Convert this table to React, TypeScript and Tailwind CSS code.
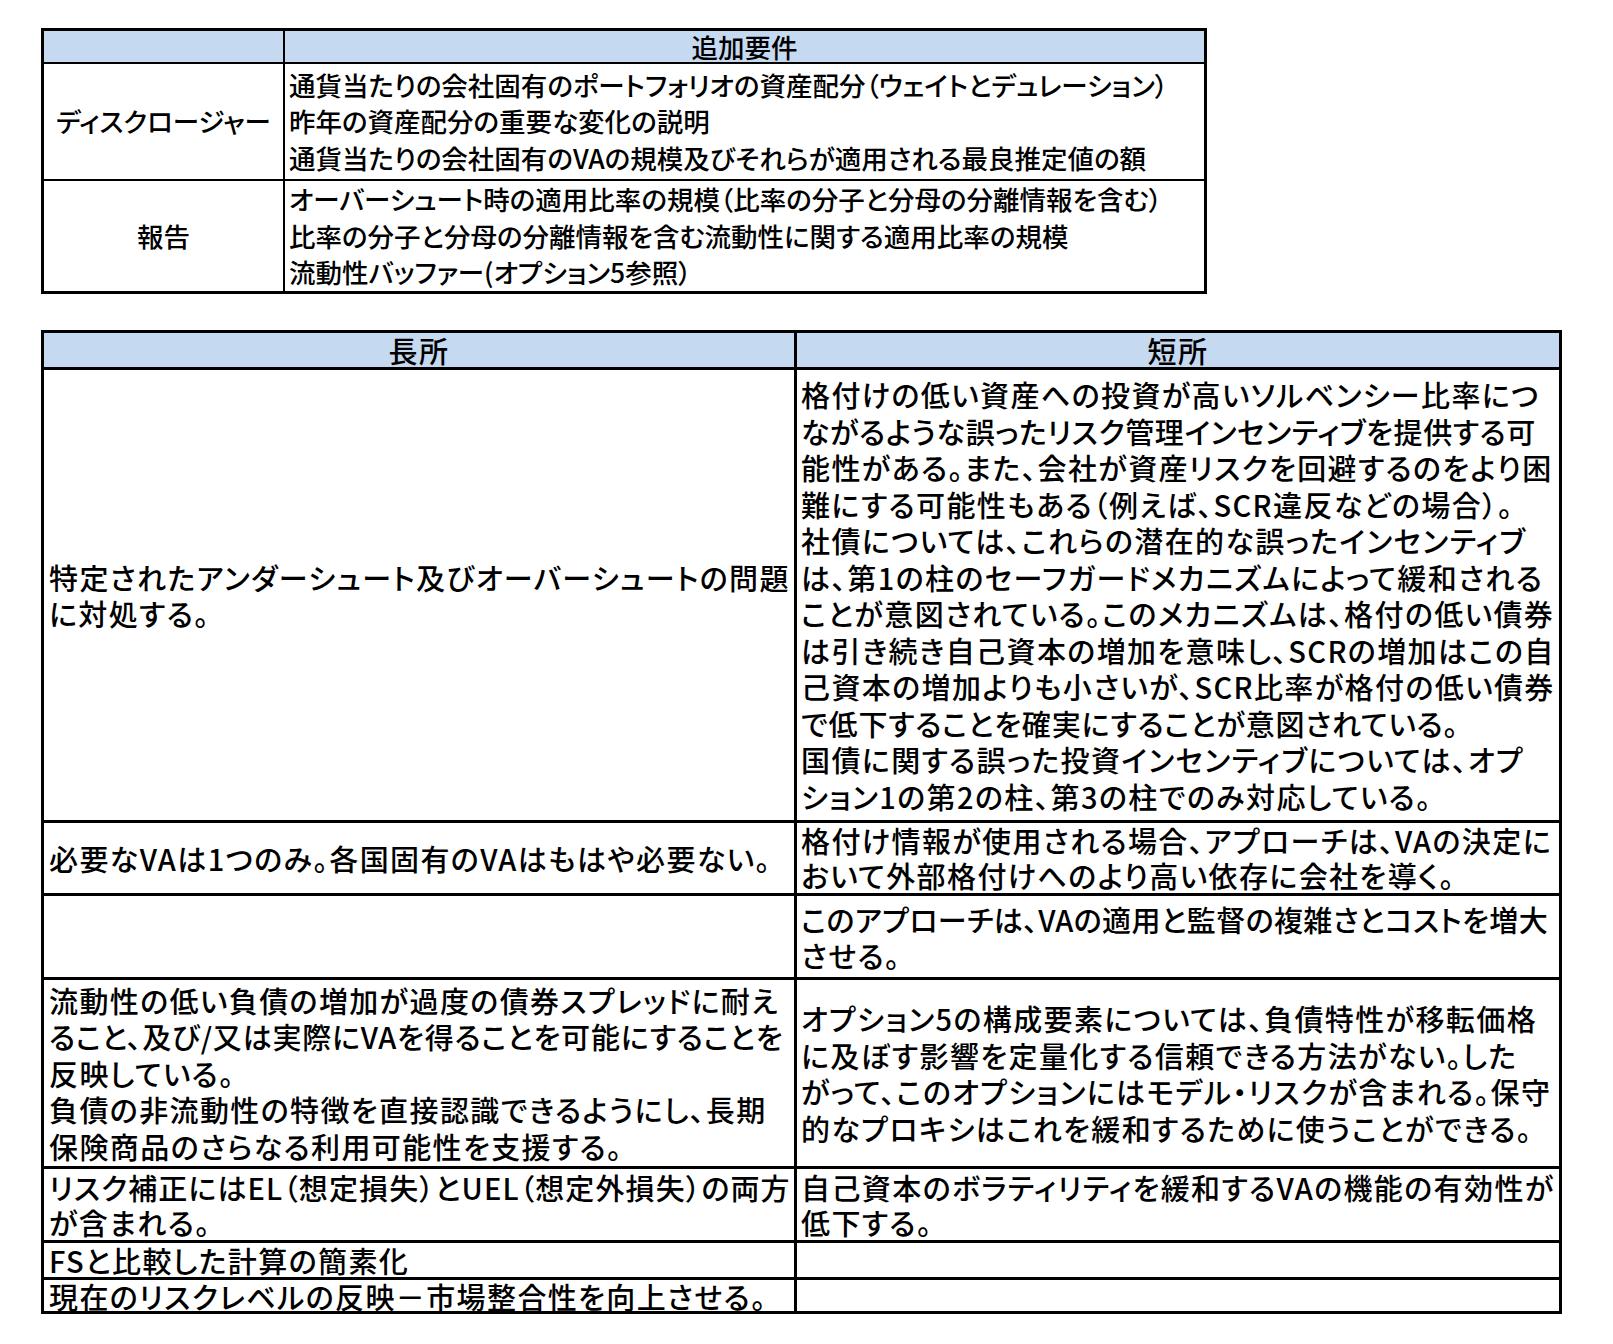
import React from "react"

const font = {
  fontFamily: '"Noto Sans CJK JP", "Noto Sans", sans-serif',
  fontFeatureSettings: '"palt"',
}

type Line = string | { t: string; c: string }

const Cell = ({ lines, className = "" }: { lines: Line[]; className?: string }) => (
  <div className={`flex flex-col justify-center overflow-visible bg-white ${className}`}>
    {lines.map((l, i) =>
      typeof l === "string" ? (
        <div key={i} className="whitespace-nowrap">
          {l}
        </div>
      ) : (
        <div key={i} className={`whitespace-nowrap ${l.c}`}>
          {l.t}
        </div>
      )
    )}
  </div>
)

const requirements = [
  {
    label: "ディスクロージャー",
    lines: [
      "通貨当たりの会社固有のポートフォリオの資産配分（ウェイトとデュレーション）",
      "昨年の資産配分の重要な変化の説明",
      "通貨当たりの会社固有のVAの規模及びそれらが適用される最良推定値の額",
    ],
  },
  {
    label: "報告",
    lines: [
      "オーバーシュート時の適用比率の規模（比率の分子と分母の分離情報を含む）",
      "比率の分子と分母の分離情報を含む流動性に関する適用比率の規模",
      "流動性バッファー(オプション5参照）",
    ],
  },
]

const prosCons: { pros: Line[]; cons: Line[]; lh: string }[] = [
  {
    pros: ["特定されたアンダーシュート及びオーバーシュートの問題", "に対処する。"],
    cons: [
      "格付けの低い資産への投資が高いソルベンシー比率につ",
      { t: "ながるような誤ったリスク管理インセンティブを提供する可", c: "tracking-[0.65px]" },
      "能性がある。また、会社が資産リスクを回避するのをより困",
      "難にする可能性もある（例えば、SCR違反などの場合）。",
      "社債については、これらの潜在的な誤ったインセンティブ",
      "は、第1の柱のセーフガードメカニズムによって緩和される",
      "ことが意図されている。このメカニズムは、格付の低い債券",
      "は引き続き自己資本の増加を意味し、SCRの増加はこの自",
      "己資本の増加よりも小さいが、SCR比率が格付の低い債券",
      { t: "で低下することを確実にすることが意図されている。", c: "tracking-[0.8px]" },
      "国債に関する誤った投資インセンティブについては、オプ",
      "ション1の第2の柱、第3の柱でのみ対応している。",
    ],
    lh: "leading-[36.5px]",
  },
  {
    pros: ["必要なVAは1つのみ。各国固有のVAはもはや必要ない。"],
    cons: [
      "格付け情報が使用される場合、アプローチは、VAの決定に",
      "おいて外部格付けへのより高い依存に会社を導く。",
    ],
    lh: "leading-[35px]",
  },
  {
    pros: [],
    cons: [
      { t: "このアプローチは、VAの適用と監督の複雑さとコストを増大", c: "tracking-[0.4px]" },
      "させる。",
    ],
    lh: "leading-[36px]",
  },
  {
    pros: [
      "流動性の低い負債の増加が過度の債券スプレッドに耐え",
      { t: "ること、及び/又は実際にVAを得ることを可能にすることを", c: "tracking-[0.8px]" },
      "反映している。",
      "負債の非流動性の特徴を直接認識できるようにし、長期",
      "保険商品のさらなる利用可能性を支援する。",
    ],
    cons: [
      "オプション5の構成要素については、負債特性が移転価格",
      "に及ぼす影響を定量化する信頼できる方法がない。した",
      "がって、このオプションにはモデル・リスクが含まれる。保守",
      "的なプロキシはこれを緩和するために使うことができる。",
    ],
    lh: "leading-[36.5px]",
  },
  {
    pros: [
      { t: "リスク補正にはEL（想定損失）とUEL（想定外損失）の両方", c: "tracking-[1.1px]" },
      "が含まれる。",
    ],
    cons: ["自己資本のボラティリティを緩和するVAの機能の有効性が", "低下する。"],
    lh: "leading-[35px]",
  },
  {
    pros: ["FSと比較した計算の簡素化"],
    cons: [],
    lh: "leading-[32px]",
  },
  {
    pros: ["現在のリスクレベルの反映－市場整合性を向上させる。"],
    cons: [],
    lh: "leading-[30px]",
  },
]

export default function App() {
  return (
    <div className="min-h-screen bg-white pl-[41px] pt-[28px] font-medium text-black" style={font}>
      {/* 追加要件 */}
      <div className="grid w-[1166px] grid-cols-[239px_919px] grid-rows-[31px_115px_110px] gap-[2px] bg-black p-[3px] text-[26.5px] leading-[36.5px]">
        <div className="bg-[#c5d9f1]" />
        <div className="flex items-center justify-center bg-[#c5d9f1] leading-[31px]">追加要件</div>
        {requirements.map((r) => (
          <React.Fragment key={r.label}>
            <Cell lines={[r.label]} className="items-center" />
            <Cell lines={r.lines} className="pl-[4px]" />
          </React.Fragment>
        ))}
      </div>

      {/* 長所 / 短所 */}
      <div className="mt-[36px] grid w-[1521px] grid-cols-[750px_762px] grid-rows-[34px_450px_70px_81px_186px_71px_34px_31px] gap-[3px] bg-black p-[3px] text-[29px] tracking-[1.4px]">
        <div className="flex items-center justify-center bg-[#c5d9f1] leading-[34px]">長所</div>
        <div className="flex items-center justify-center bg-[#c5d9f1] leading-[34px]">短所</div>
        {prosCons.map((r, i) => (
          <React.Fragment key={i}>
            <Cell lines={r.pros} className={`pl-[5px] ${r.lh}`} />
            <Cell lines={r.cons} className={`pl-[4px] ${r.lh}`} />
          </React.Fragment>
        ))}
      </div>
    </div>
  )
}
